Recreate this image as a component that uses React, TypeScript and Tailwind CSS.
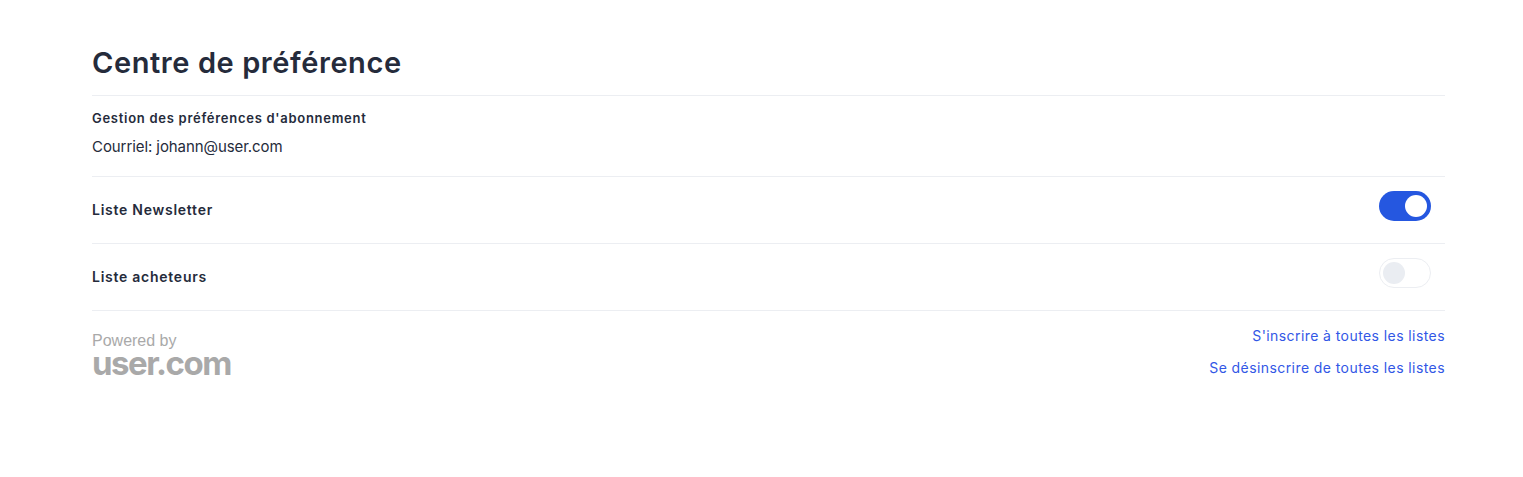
export default function App() {
  return (
    <div className="min-h-[477px] bg-white pl-[92px] pr-[78px] pt-[42px] text-[#252b3b] font-['Inter',sans-serif]">
      <h1 className="h-[53px] text-[29px] leading-[42px] font-semibold tracking-[0.58px]">Centre de préférence</h1>
      <div className="h-[81px] border-t border-[#eceef2] pt-[13px]">
        <p className="text-[13px] leading-[18px] font-semibold tracking-[0.72px]">Gestion des préférences d'abonnement</p>
        <p className="mt-[10px] text-[15px] leading-[20px] tracking-[-0.08px]">Courriel: johann@user.com</p>
      </div>
      <div className="flex h-[67px] items-start justify-between border-t border-[#eceef2] pr-[14px] pt-[14px]">
        <span className="mt-[9px] text-[14px] leading-[20px] font-semibold tracking-[0.74px]">Liste Newsletter</span>
        <div className="flex h-[30px] w-[52px] items-center justify-end rounded-full bg-[#2557e0] pr-[4px]">
          <div className="size-[22px] rounded-full bg-white" />
        </div>
      </div>
      <div className="flex h-[67px] items-start justify-between border-t border-[#eceef2] pr-[14px] pt-[14px]">
        <span className="mt-[9px] text-[14px] leading-[20px] font-semibold tracking-[0.74px]">Liste acheteurs</span>
        <div className="flex h-[30px] w-[52px] items-center rounded-full border border-[#eceef2] bg-white pl-[3px]">
          <div className="size-[22px] rounded-full bg-[#eaedf2]" />
        </div>
      </div>
      <div className="flex items-start justify-between border-t border-[#eceef2] pt-[15px]">
        <div className="flex flex-col text-[#a9a9a9]">
          <span className="mt-[6px] text-[16px] leading-[18px] font-['Liberation_Sans',sans-serif]">Powered by</span>
          <span className="mt-[1px] text-[33px] leading-[24px] font-bold tracking-[-1.5px]">user.com</span>
        </div>
        <div className="flex flex-col items-end gap-[12px] text-[14px] leading-[20px] tracking-[0.42px] text-[#3257e6]">
          <a>S'inscrire à toutes les listes</a>
          <a>Se désinscrire de toutes les listes</a>
        </div>
      </div>
    </div>
  );
}
